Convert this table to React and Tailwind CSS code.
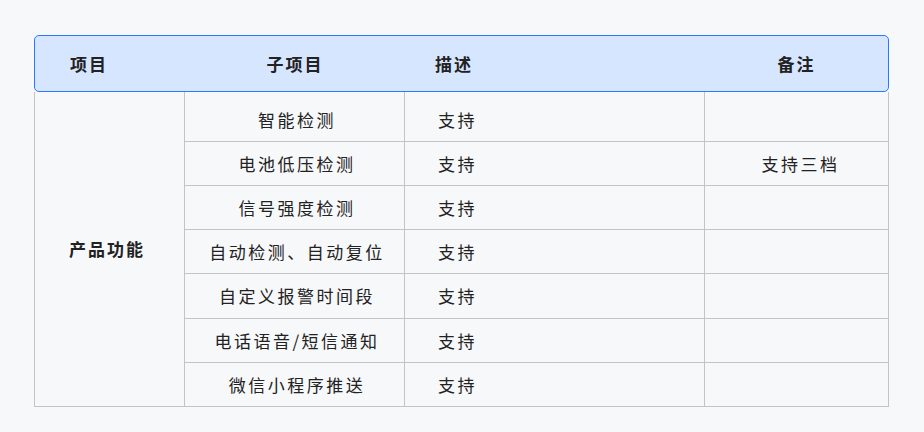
import React from 'react';

const rows = [
  { sub: '智能检测', desc: '支持', note: '' },
  { sub: '电池低压检测', desc: '支持', note: '支持三档' },
  { sub: '信号强度检测', desc: '支持', note: '' },
  { sub: '自动检测、自动复位', desc: '支持', note: '' },
  { sub: '自定义报警时间段', desc: '支持', note: '' },
  { sub: '电话语音/短信通知', desc: '支持', note: '' },
  { sub: '微信小程序推送', desc: '支持', note: '' },
];

const App = () => {
  return (
    <div
      className='min-h-[432px] w-[924px] bg-[#f7f8fa] pt-[35px] pl-[34px] text-[#222]'
      style={{ fontFamily: '"Noto Sans CJK SC", "Noto Sans", sans-serif' }}
    >
      <div className='w-[855px]'>
        <div className='flex h-[57px] items-center rounded-[5px] border border-[#2a78ff] bg-[#d7e6ff] text-[17px] font-bold tracking-[2px]'>
          <div className='w-[150px] pl-[35px]'>项目</div>
          <div className='w-[220px] text-center'>子项目</div>
          <div className='w-[300px] pl-[30px]'>描述</div>
          <div className='flex-1 text-center'>备注</div>
        </div>

        <div className='flex border-x border-b border-[#c4c4c4] text-[17px] tracking-[2.5px]'>
          <div className='flex w-[149px] items-center pl-[34px] text-[17px] font-bold tracking-[2px]'>产品功能</div>
          <div className='flex-1'>
            {rows.map((r, i) => (
              <div
                key={i}
                className={
                  'flex border-[#c4c4c4] ' +
                  (i === 0 ? 'h-[49px]' : i === 4 ? 'h-[45px] border-t' : 'h-[44px] border-t')
                }
              >
                <div className={'flex w-[220px] items-center justify-center border-l border-[#c4c4c4] pl-[5px] ' + (i === 0 ? 'pt-[6px]' : '')}>{r.sub}</div>
                <div className={'flex w-[300px] items-center border-l border-[#c4c4c4] pl-[33px] ' + (i === 0 ? 'pt-[6px]' : '')}>{r.desc}</div>
                <div className={'flex flex-1 items-center justify-center border-l border-[#c4c4c4] pl-[8px] ' + (i === 0 ? 'pt-[6px]' : '')}>{r.note}</div>
              </div>
            ))}
          </div>
        </div>
      </div>
    </div>
  );
};

export default App;
